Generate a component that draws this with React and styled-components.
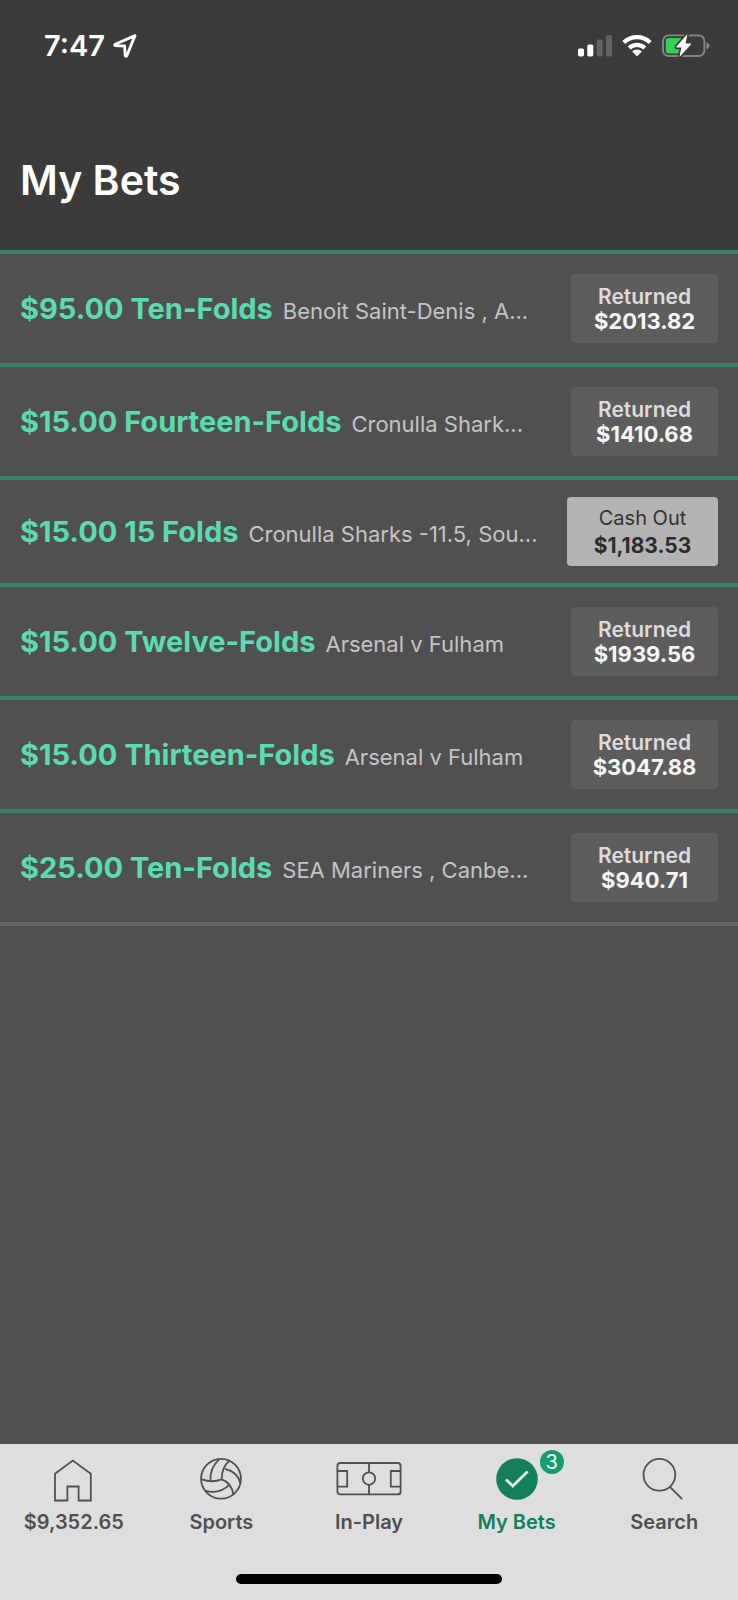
import React from 'react';
import styled, { createGlobalStyle } from 'styled-components';

const Color = {
  header: '#3b3b3b',
  body: '#505050',
  line: '#37806a',
  lineEnd: '#646464',
  stake: '#5bdcb0',
  muted: '#c4c4c4',
  chip: '#5d5d5d',
  cashOut: '#b4b4b4',
  nav: '#dedede',
  navText: '#505050',
  active: '#137f5b',
  badge: '#179b6d'
};

const bets = [
  {
    stake: '$95.00 Ten-Folds',
    detail: 'Benoit Saint-Denis , A...',
    label: 'Returned',
    amount: '$2013.82'
  },
  {
    stake: '$15.00 Fourteen-Folds',
    detail: 'Cronulla Shark...',
    label: 'Returned',
    amount: '$1410.68'
  },
  {
    stake: '$15.00 15 Folds',
    detail: 'Cronulla Sharks -11.5, Sou...',
    label: 'Cash Out',
    amount: '$1,183.53',
    open: true
  },
  {
    stake: '$15.00 Twelve-Folds',
    detail: 'Arsenal v Fulham',
    label: 'Returned',
    amount: '$1939.56'
  },
  {
    stake: '$15.00 Thirteen-Folds',
    detail: 'Arsenal v Fulham',
    label: 'Returned',
    amount: '$3047.88'
  },
  {
    stake: '$25.00 Ten-Folds',
    detail: 'SEA Mariners , Canbe...',
    label: 'Returned',
    amount: '$940.71'
  }
];

const LocationIcon = () => (
  <svg width="24" height="24" viewBox="0 0 24 24" aria-hidden="true">
    <path
      d="M22 1.6 2.2 10.2Q1.2 11.2 2.4 11.6L11.6 12 12.2 21.6Q12.8 23 13.8 21.8Z"
      fill="none"
      stroke="#fff"
      strokeWidth="2.8"
      strokeLinejoin="round"
    />
  </svg>
);

const SignalIcon = () => (
  <svg width="34" height="24" viewBox="0 0 34 24" aria-hidden="true">
    <rect x="0" y="14.4" width="6" height="8" rx="1.6" fill="#fff" />
    <rect x="9.3" y="10.4" width="6" height="12" rx="1.6" fill="#fff" />
    <rect x="18.6" y="5.4" width="6" height="17" rx="1.6" fill="#626262" />
    <rect x="28" y="1" width="6" height="21.4" rx="1.6" fill="#626262" />
  </svg>
);

const WifiIcon = () => (
  <svg width="30" height="24" viewBox="0 0 30 24" aria-hidden="true">
    <g fill="none" stroke="#fff" strokeWidth="4.2">
      <path d="M1.8 8.4A18.9 18.9 0 0 1 28.2 8.4" />
      <path d="M7.2 14A11.2 11.2 0 0 1 22.8 14" />
    </g>
    <path d="M10.2 17.4A6.9 6.9 0 0 1 19.8 17.4L15.7 21.8Q15 22.4 14.3 21.8Z" fill="#fff" />
  </svg>
);

const BatteryIcon = () => (
  <svg width="48" height="26" viewBox="0 0 48 26" aria-hidden="true">
    <rect x="1" y="2.4" width="41.4" height="20.6" rx="5.6" fill="none" stroke="#858585" strokeWidth="1.9" />
    <path d="M44.4 9.2Q47.6 10.4 47.6 12.7T44.4 16.2Z" fill="#858585" />
    <path d="M6.6 5H19V20.4H6.6Q3.8 20.4 3.8 17.6V7.8Q3.8 5 6.6 5Z" fill="#35d058" />
    <path
      d="M25.4 1 14.4 13.6Q13.8 14.6 14.8 14.6H19.4L17.4 24 28.8 11.8Q29.4 10.6 28.4 10.6H23.6Z"
      fill="#fff"
      stroke={Color.header}
      strokeWidth="3.4"
      paintOrder="stroke"
      strokeLinejoin="round"
    />
  </svg>
);

const HomeIcon = () => (
  <NavSvg width="44" viewBox="0 0 44 46">
    <path d="M3 15.8 20.8 2.6 38.8 15.8V42.5H26.6V28.5H15.4V42.5H3Z" />
  </NavSvg>
);

const SportsIcon = () => (
  <NavSvg width="44" viewBox="0 0 44 46">
    <circle cx="22" cy="20.8" r="19.9" />
    <path d="M20.4 1.1Q10.8 9.6 11.4 23M30.4 2.8Q22.8 9.2 22.6 21.4M2.1 21.1Q13 25.2 22.6 21.4M22.6 21.4Q32.4 24.6 34.4 36.6M26.2 11Q38.6 13.8 41.4 25.4M30.8 26.4Q20.6 36.8 6.2 32.8" />
  </NavSvg>
);

const InPlayIcon = () => (
  <NavSvg width="66" viewBox="0 0 66 46">
    <rect x="1.4" y="5" width="63.2" height="31.4" rx="3" />
    <path d="M33 5V14.4M33 26.8V36.4M1.4 13H11.2V28.6H1.4M64.6 13H54.8V28.6H64.6" />
    <circle cx="33" cy="20.6" r="6.2" />
  </NavSvg>
);

const CheckIcon = () => (
  <NavSvg width="44" viewBox="0 0 44 46">
    <circle cx="22" cy="21" r="20.8" fill={Color.active} stroke="none" />
    <path d="M11 21.4 17.8 28 32.6 13.4" stroke="#e9f3ef" strokeWidth="2.8" />
  </NavSvg>
);

const SearchIcon = () => (
  <NavSvg width="44" viewBox="0 0 44 46">
    <circle cx="17.4" cy="16.8" r="15.9" />
    <path d="M27.6 28.6 40.2 41.2" />
  </NavSvg>
);

const tabs = [
  { label: '$9,352.65', Icon: HomeIcon },
  { label: 'Sports', Icon: SportsIcon },
  { label: 'In-Play', Icon: InPlayIcon },
  { label: 'My Bets', Icon: CheckIcon, active: true, count: 3 },
  { label: 'Search', Icon: SearchIcon }
];

const BetRow = ({ bet }) => (
  <Row $open={bet.open}>
    <Summary>
      <Stake>{bet.stake}</Stake>
      <Detail>{bet.detail}</Detail>
    </Summary>
    {bet.open ? (
      <CashOutButton type="button">
        <span>{bet.label}</span>
        <Amount>{bet.amount}</Amount>
      </CashOutButton>
    ) : (
      <Result>
        <span>{bet.label}</span>
        <Amount>{bet.amount}</Amount>
      </Result>
    )}
  </Row>
);

export default () => (
  <Screen>
    <GlobalStyle />
    <Header>
      <StatusBar>
        <Clock>
          7:47
          <LocationIcon />
        </Clock>
        <StatusIcons>
          <SignalIcon />
          <WifiIcon />
          <BatteryIcon />
        </StatusIcons>
      </StatusBar>
      <Title>My Bets</Title>
    </Header>
    <BetList>
      {bets.map(bet => (
        <BetRow key={bet.amount} bet={bet} />
      ))}
    </BetList>
    <Footer>
      <Nav>
        {tabs.map(({ label, Icon, active, count }) => (
          <Tab
            key={label}
            href="#"
            $active={active}
            aria-current={active ? 'page' : undefined}
          >
            <IconBox>
              <Icon />
              {count && <Badge>{count}</Badge>}
            </IconBox>
            {label}
          </Tab>
        ))}
      </Nav>
      <HomeIndicator />
    </Footer>
  </Screen>
);

const GlobalStyle = createGlobalStyle`
  * {
    box-sizing: border-box;
  }
  body {
    margin: 0;
    background: ${Color.body};
    font-family: Inter, Roboto, "Liberation Sans", sans-serif;
  }
  svg {
    display: block;
    flex: none;
  }
`;
const Screen = styled.div`
  display: flex;
  flex-direction: column;
  min-height: 100vh;
`;
const Header = styled.header`
  padding-bottom: 44px;
  color: #fff;
  background: ${Color.header};
`;
const StatusBar = styled.div`
  display: flex;
  justify-content: space-between;
  align-items: center;
  padding: 28px 28px 0 44px;
`;
const Clock = styled.div`
  display: flex;
  align-items: center;
  gap: 8px;
  font-size: 29px;
  font-weight: 600;
  line-height: 36px;
`;
const StatusIcons = styled.div`
  display: flex;
  align-items: center;
  gap: 10px;
`;
const Title = styled.h1`
  margin: 0;
  padding: 90px 20px 0;
  font-size: 41px;
  font-weight: 600;
  line-height: 52px;
`;
const BetList = styled.ul`
  flex: 1;
  margin: 0;
  padding: 0;
  list-style: none;
`;
const Row = styled.li`
  display: flex;
  justify-content: space-between;
  align-items: center;
  gap: 20px;
  padding: ${props => (props.$open ? '17px 20px' : '20px')};
  border-top: 4px solid ${Color.line};
  &:last-child {
    border-bottom: 4px solid ${Color.lineEnd};
  }
`;
const Summary = styled.div`
  display: flex;
  align-items: baseline;
  gap: 10px;
  min-width: 0;
  white-space: nowrap;
`;
const Stake = styled.span`
  font-size: 29px;
  font-weight: 700;
  line-height: 36px;
  color: ${Color.stake};
`;
const Detail = styled.span`
  overflow: hidden;
  font-size: 22px;
  line-height: 28px;
  text-overflow: ellipsis;
  color: ${Color.muted};
`;
const Result = styled.div`
  display: flex;
  flex: none;
  flex-direction: column;
  justify-content: center;
  align-items: center;
  width: 147px;
  height: 69px;
  border-radius: 4px;
  font-size: 21px;
  font-weight: 600;
  line-height: 25px;
  color: #dcdcdc;
  background: ${Color.chip};
`;
const Amount = styled.span`
  font-size: 22px;
  font-weight: 700;
  color: #f6f6f6;
`;
const CashOutButton = styled(Result).attrs({ as: 'button' })`
  width: 151px;
  padding: 0;
  border: 0;
  font-family: inherit;
  font-size: 20px;
  font-weight: 400;
  line-height: 28px;
  color: #333;
  background: ${Color.cashOut};
  cursor: pointer;
  ${Amount} {
    font-size: 21px;
    color: #2c2c2c;
  }
`;
const Footer = styled.footer`
  padding: 14px 0 16px;
  background: ${Color.nav};
`;
const Nav = styled.nav`
  display: grid;
  grid-template-columns: repeat(5, 1fr);
`;
const Tab = styled.a`
  display: flex;
  flex-direction: column;
  align-items: center;
  gap: 6px;
  font-size: 20px;
  font-weight: 600;
  line-height: 24px;
  text-decoration: none;
  color: ${props => (props.$active ? Color.active : Color.navText)};
`;
const IconBox = styled.span`
  position: relative;
`;
const NavSvg = styled.svg.attrs({ height: 46, 'aria-hidden': true })`
  fill: none;
  stroke: ${Color.navText};
  stroke-width: 1.8;
`;
const Badge = styled.span`
  position: absolute;
  top: -8px;
  left: 45px;
  width: 24px;
  height: 24px;
  border-radius: 50%;
  font-size: 20px;
  font-weight: 400;
  text-align: center;
  color: #fff;
  background: ${Color.badge};
`;
const HomeIndicator = styled.div`
  width: 36%;
  height: 10px;
  margin: 40px auto 0;
  border-radius: 5px;
  background: #000;
`;
